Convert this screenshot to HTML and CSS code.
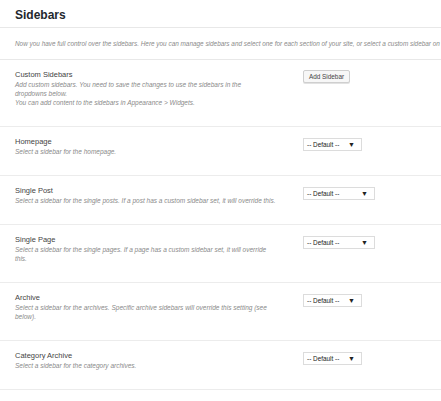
FILE: index.html
```html
<!DOCTYPE html>
<html lang="en">
<head>
  <meta charset="UTF-8">
  <title>Sidebars</title>
  <link rel="stylesheet" href="styles.css">
</head>
<body>
  <div class="page">
    <!-- Page title -->
    <div class="page-head">
      <h1>Sidebars</h1>
    </div>

    <div class="intro">
      <p>Now you have full control over the sidebars. Here you can manage sidebars and select one for each section of your site, or select a custom sidebar on each page or post.</p>
    </div>

    <!-- Custom sidebars -->
    <div class="row">
      <div class="info">
        <div class="label">Custom Sidebars</div>
        <div class="desc">Add custom sidebars. You need to save the changes to use the sidebars in the<br>dropdowns below.<br>You can add content to the sidebars in Appearance &gt; Widgets.</div>
      </div>
      <div class="control">
        <button class="btn" type="button">Add Sidebar</button>
      </div>
    </div>

    <div class="row">
      <div class="info">
        <div class="label">Homepage</div>
        <div class="desc">Select a sidebar for the homepage.</div>
      </div>
      <div class="control">
        <div class="select"><span>-- Default --</span><span class="arrow">▼</span></div>
      </div>
    </div>

    <div class="row">
      <div class="info">
        <div class="label">Single Post</div>
        <div class="desc">Select a sidebar for the single posts. If a post has a custom sidebar set, it will override this.</div>
      </div>
      <div class="control">
        <div class="select wide"><span>-- Default --</span><span class="arrow">▼</span></div>
      </div>
    </div>

    <div class="row">
      <div class="info">
        <div class="label">Single Page</div>
        <div class="desc">Select a sidebar for the single pages. If a page has a custom sidebar set, it will override this.</div>
      </div>
      <div class="control">
        <div class="select wide"><span>-- Default --</span><span class="arrow">▼</span></div>
      </div>
    </div>

    <div class="row">
      <div class="info">
        <div class="label">Archive</div>
        <div class="desc">Select a sidebar for the archives. Specific archive sidebars will override this setting (see below).</div>
      </div>
      <div class="control">
        <div class="select"><span>-- Default --</span><span class="arrow">▼</span></div>
      </div>
    </div>

    <div class="row">
      <div class="info">
        <div class="label">Category Archive</div>
        <div class="desc">Select a sidebar for the category archives.</div>
      </div>
      <div class="control">
        <div class="select"><span>-- Default --</span><span class="arrow">▼</span></div>
      </div>
    </div>

    <div class="row">
      <div class="info">
        <div class="label">Tag Archive</div>
        <div class="desc">Select a sidebar for the tag archives.</div>
      </div>
      <div class="control">
        <div class="select"><span>-- Default --</span><span class="arrow">▼</span></div>
      </div>
    </div>
  </div>
</body>
</html>
```

FILE: styles.css
```css
html, body { margin: 0; padding: 0; background: #fff; overflow: hidden; }
body { font-family: "Liberation Sans", Arial, sans-serif; color: #444; }
.page { width: 441px; }

/* Title bar */
.page-head { padding: 8px 15px 5px; border-bottom: 1px solid #e8e8e8; }
.page-head h1 { margin: 0; font-size: 12px; line-height: 14px; font-weight: bold; color: #23282d; }

.intro { padding: 12px 15px 11px; border-bottom: 1px solid #e8e8e8; overflow: hidden; }
.intro p { margin: 0; font-size: 6.4px; line-height: 8px; font-style: italic; color: #8a8a8a; white-space: nowrap; }

/* Setting rows */
.row {
  display: grid;
  grid-template-columns: 262px auto;
  column-gap: 26px;
  padding: 10px 15px 19px;
  border-bottom: 1px solid #ececec;
}
.label { font-size: 7.5px; line-height: 10px; color: #444; }
.desc { font-size: 6.5px; line-height: 9px; font-style: italic; color: #8a8a8a; }
.control { display: flex; align-items: flex-start; }

.btn {
  width: 47px;
  height: 13px;
  padding: 0;
  font-family: "Liberation Sans", Arial, sans-serif;
  font-size: 6.4px;
  color: #444;
  background: #f7f7f7;
  border: 1px solid #cfcfcf;
  border-radius: 2px;
  box-shadow: 0 1px 0 #e2e2e2;
}

.select {
  display: flex;
  align-items: center;
  width: 59px;
  height: 13px;
  box-sizing: border-box;
  margin-top: 1px;
  padding: 0 6px 0 3px;
  border: 1px solid #dcdcdc;
  background: #fff;
  font-size: 6.4px;
  color: #222;
}
.select.wide { width: 72px; }
.select .arrow { margin-left: auto; font-size: 7px; color: #222; }
```
